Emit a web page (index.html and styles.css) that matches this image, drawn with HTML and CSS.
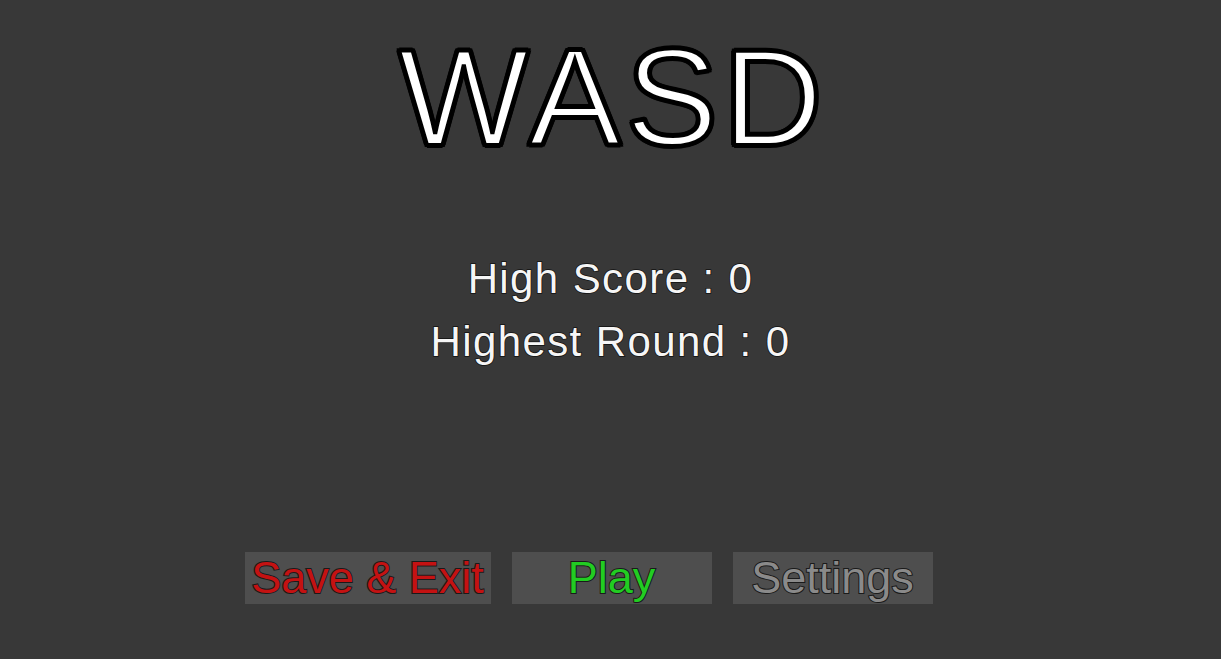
FILE: index.html
```html
<!DOCTYPE html>
<html>
<head>
<meta charset="utf-8">
<link rel="stylesheet" href="styles.css">
</head>
<body>
<main class="screen">
  <h1 class="title">WASD</h1>
  <section class="stats">
    <p class="stat">High Score : 0</p>
    <p class="stat">Highest Round : 0</p>
  </section>
  <nav class="buttons">
    <button class="btn btn-exit">Save &amp; Exit</button>
    <button class="btn btn-play">Play</button>
    <button class="btn btn-settings">Settings</button>
  </nav>
</main>
</body>
</html>
```

FILE: styles.css
```css
html, body {
  margin: 0;
  padding: 0;
  background: #383838;
  height: 100%;
  overflow: hidden;
}
.screen {
  width: 1221px;
  height: 659px;
  display: flex;
  flex-direction: column;
  align-items: center;
  font-family: "Liberation Sans", Arial, sans-serif;
}
.title {
  margin: 22px 0 0 0;
  padding-left: 5px;
  font-size: 138px;
  font-weight: normal;
  line-height: 150px;
  color: #ffffff;
  -webkit-text-stroke: 4px #000;
  letter-spacing: 5px;
  text-shadow:
    3px 0 0 #000, -3px 0 0 #000, 0 3px 0 #000, 0 -3px 0 #000,
    2.2px 2.2px 0 #000, -2.2px 2.2px 0 #000, 2.2px -2.2px 0 #000, -2.2px -2.2px 0 #000,
    0 0 3px #000;
}
.stats {
  margin-top: 75px;
  display: flex;
  flex-direction: column;
  align-items: center;
}
.stat {
  margin: 0;
  font-size: 42px;
  line-height: 63px;
  letter-spacing: 1.4px;
  color: #f6f6f6;
  -webkit-text-stroke: 1.5px #111;
  paint-order: stroke fill;
}
.buttons {
  margin-top: auto;
  margin-bottom: 55px;
  display: flex;
  gap: 21px;
  padding-right: 44px;
}
.btn {
  height: 52px;
  border: none;
  background: #4e4e4e;
  font-family: "Liberation Sans", Arial, sans-serif;
  font-size: 45px;
  line-height: 52px;
  padding: 0;
  -webkit-text-stroke: 2px #1a1a1a;
  paint-order: stroke fill;
}
.btn-exit { width: 246px; color: #c41212; }
.btn-play { width: 200px; color: #22cc22; }
.btn-settings { width: 200px; color: #8a8a8a; }
```
